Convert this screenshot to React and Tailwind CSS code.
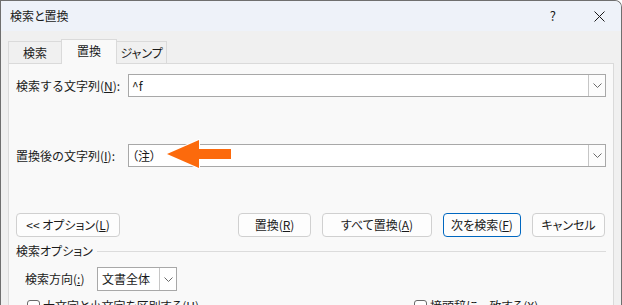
import React from 'react';

const font = "font-['Noto_Sans_CJK_JP',sans-serif] [font-feature-settings:'palt']";

const Chevron = () => (
  <svg width="9" height="5" viewBox="0 0 9 5" className="text-[#6a6a6a]">
    <path d="M0.5 0.5 L4.5 4.5 L8.5 0.5" fill="none" stroke="currentColor" strokeWidth="1" />
  </svg>
);

const Combo = ({ value, children }) => (
  <div className="relative flex-1 h-[23px] flex items-stretch bg-white border border-[#a8a8a8]">
    <div className="flex-1 flex items-center pl-[3px] text-[12px] text-[#1a1a1a]">{value}</div>
    <div className="w-[17px] flex items-center justify-center border-l border-[#c6c6c6] bg-[#fcfcfc]">
      <Chevron />
    </div>
    {children}
  </div>
);

const Btn = ({ w, primary, children }) => (
  <button
    className={`h-[24px] ${w} rounded-[4px] border text-[12px] text-[#1a1a1a] bg-[#fdfdfd] flex items-center justify-center ${primary ? 'border-[#0067c0]' : 'border-[#d0d0d0]'}`}
  >
    {children}
  </button>
);

const Check = ({ children }) => (
  <div className="flex items-center gap-[3px] text-[12px] text-[#1a1a1a]">
    <span className="w-[13px] h-[13px] rounded-[3px] border border-[#6a6a6a] bg-white" />
    <span>{children}</span>
  </div>
);

export default function App() {
  return (
    <div className={`w-[622px] h-[305px] overflow-hidden bg-[#f0f0f0] border-l border-t border-r border-[#6f6f6f] rounded-tr-[7px] ${font}`}>
      {/* title bar */}
      <div className="h-[30px] bg-[#eef2f9] flex items-center pl-[9px] pr-[16px] text-[12px] text-[#1a1a1a]">
        <span>検索と置換</span>
        <span className="ml-auto mr-[38px] text-[13px]">?</span>
        <svg width="11" height="11" viewBox="0 0 11 11">
          <path d="M0.5 0.5 L10.5 10.5 M10.5 0.5 L0.5 10.5" stroke="#1a1a1a" strokeWidth="1" />
        </svg>
      </div>

      <div className="pl-[7px] pt-[8px]">
        {/* tabs */}
        <div className="flex items-end h-[24px] text-[12px] text-[#1a1a1a]">
          <div className="w-[53px] h-[22px] border-l border-t border-[#dadada] flex items-center justify-center">検索</div>
          <div className="w-[56px] h-[25px] -mb-px relative z-10 bg-[#f9f9f9] border-l border-t border-r border-[#dadada] flex items-center justify-center pb-[2px]">置換</div>
          <div className="w-[50px] h-[22px] border-t border-r border-[#dadada] flex items-center justify-center">ジャンプ</div>
        </div>

        {/* panel */}
        <div className="w-[606px] h-[260px] bg-[#f9f9f9] border border-[#dadada] pl-[7px] pr-[7px] pt-[10px] text-[12px] text-[#1a1a1a]">
          <div className="flex items-center">
            <div className="w-[112px] [font-feature-settings:normal]">検索する文字列(<span className="underline">N</span>):</div>
            <Combo value="^f" />
          </div>

          <div className="flex items-center mt-[47px]">
            <div className="w-[112px] [font-feature-settings:normal]">置換後の文字列(<span className="underline">I</span>):</div>
            <Combo value="（注）">
              <svg className="absolute left-[33px] top-[-9px]" width="72" height="36" viewBox="0 0 72 36">
                <polygon
                  points="5,18 37,4 37,13 69,13 69,23 37,23 37,32"
                  fill="#fc6a0c"
                  stroke="#ffffff"
                  strokeWidth="2"
                  strokeLinejoin="round"
                  paintOrder="stroke"
                />
              </svg>
            </Combo>
          </div>

          {/* buttons */}
          <div className="flex items-center mt-[46px] pr-[1px]">
            <Btn w="w-[104px]">&lt;&lt; オプション(<span className="underline">L</span>)</Btn>
            <div className="ml-auto flex gap-[11px]">
              <Btn w="w-[73px]">置換(<span className="underline">R</span>)</Btn>
              <Btn w="w-[110px]">すべて置換(<span className="underline">A</span>)</Btn>
              <Btn w="w-[78px]" primary>次を検索(<span className="underline">F</span>)</Btn>
              <Btn w="w-[73px]">キャンセル</Btn>
            </div>
          </div>

          {/* search options */}
          <div className="flex items-center mt-[6px] h-[16px]">
            <span>検索オプション</span>
            <div className="flex-1 h-px bg-[#dcdcdc] ml-[4px]" />
          </div>

          <div className="flex items-center mt-[8px] pl-[9px]">
            <div className="w-[72px]">検索方向(<span className="underline">:</span>)</div>
            <div className="w-[80px] h-[24px] flex items-stretch bg-white border border-[#a8a8a8]">
              <div className="flex-1 flex items-center pl-[4px]">文書全体</div>
              <div className="w-[17px] flex items-center justify-center border-l border-[#c6c6c6]">
                <Chevron />
              </div>
            </div>
          </div>

          <div className="flex mt-[6px] pl-[11px]">
            <div className="w-[387px]">
              <Check>大文字と小文字を区別する(<span className="underline">H</span>)</Check>
            </div>
            <Check>接頭辞に一致する(<span className="underline">X</span>)</Check>
          </div>
        </div>
      </div>
    </div>
  );
}
